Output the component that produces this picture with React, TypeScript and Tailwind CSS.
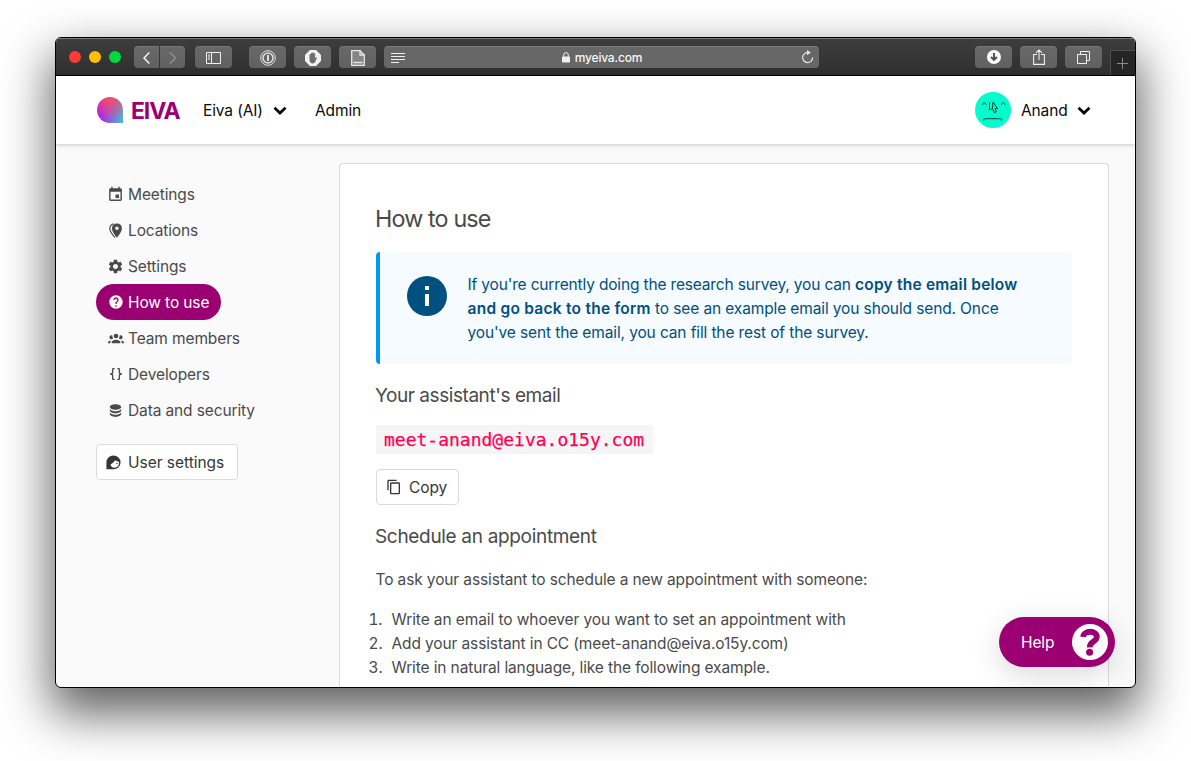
import type { ReactNode } from "react";
import { MdContentCopy, MdEvent, MdHelp, MdSettings } from "react-icons/md";

const nav: { label: string; icon: ReactNode; active?: boolean }[] = [
  { label: "Meetings", icon: <MdEvent size={17} /> },
  {
    label: "Locations",
    icon: (
      <svg width="17" height="17" viewBox="0 0 24 24" fill="currentColor">
        <path d="M14 2a6.800 6.800 0 0 0-7 7c0 5.200 7 13 7 13s7-7.800 7-13a6.800 6.800 0 0 0-7-7zm0 4.400a2.500 2.500 0 1 1 0 5 2.500 2.500 0 0 1 0-5z" />
        <path d="M9.500 2.500C6.500 3.400 4 5.500 4 9c0 4.500 5.500 11.500 7.500 13" fill="none" stroke="currentColor" strokeWidth="1.700" />
      </svg>
    ),
  },
  { label: "Settings", icon: <MdSettings size={17} /> },
  { label: "How to use", icon: <MdHelp size={16} />, active: true },
  {
    label: "Team members",
    icon: (
      <svg width="16" height="16" viewBox="0 0 24 24" fill="currentColor" className="shrink-0">
        <path d="M12 5.500A3.500 3.500 0 0 1 15.500 9 3.500 3.500 0 0 1 12 12.500 3.500 3.500 0 0 1 8.500 9 3.500 3.500 0 0 1 12 5.500M5 8c.56 0 1.080.15 1.530.42-.15 1.430.27 2.850 1.130 3.960C7.160 13.340 6.160 14 5 14a3 3 0 0 1 0-6m14 0a3 3 0 0 1 0 6c-1.160 0-2.160-.66-2.660-1.620.86-1.110 1.280-2.530 1.130-3.960C17.920 8.150 18.440 8 19 8M5.500 18.250c0-2.070 2.910-3.750 6.500-3.750s6.500 1.680 6.500 3.750V20h-13zM0 20v-1.500c0-1.390 1.890-2.560 4.450-2.900-.59.68-.95 1.620-.95 2.650V20zm24 0h-3.500v-1.750c0-1.030-.36-1.970-.95-2.650 2.560.34 4.450 1.510 4.450 2.900z" />
      </svg>
    ),
  },
  {
    label: "Developers",
    icon: (
      <svg width="16" height="16" viewBox="0 0 24 24" fill="currentColor">
        <path d="M8 3a2 2 0 0 0-2 2v4a2 2 0 0 1-2 2H3v2h1a2 2 0 0 1 2 2v4a2 2 0 0 0 2 2h2v-2H8v-5a2 2 0 0 0-2-2 2 2 0 0 0 2-2V5h2V3m6 0a2 2 0 0 1 2 2v4a2 2 0 0 0 2 2h1v2h-1a2 2 0 0 0-2 2v4a2 2 0 0 1-2 2h-2v-2h2v-5a2 2 0 0 1 2-2 2 2 0 0 1-2-2V5h-2V3z" />
      </svg>
    ),
  },
  {
    label: "Data and security",
    icon: (
      <svg width="17" height="17" viewBox="0 0 24 24" fill="currentColor">
        <path d="M12 3C7.580 3 4 4.790 4 7s3.580 4 8 4 8-1.790 8-4-3.580-4-8-4M4 9v3c0 2.210 3.580 4 8 4s8-1.790 8-4V9c0 2.210-3.580 4-8 4s-8-1.790-8-4m0 5v3c0 2.210 3.580 4 8 4s8-1.790 8-4v-3c0 2.210-3.580 4-8 4s-8-1.790-8-4z" />
      </svg>
    ),
  },
];

function ToolButton({
  children,
  className = "",
  shape = "w-[37px] rounded-[4px] text-[#f0f0f0]",
}: {
  children: ReactNode;
  className?: string;
  shape?: string;
}) {
  return (
    <div
      className={`flex h-[22px] shrink-0 items-center justify-center border-t border-[#777] bg-gradient-to-b from-[#686868] to-[#616161] ${shape} ${className}`}
    >
      {children}
    </div>
  );
}

function Chevron() {
  return (
    <svg width="14" height="10" viewBox="0 0 14 10" fill="none" stroke="#0a0a0a" strokeWidth="2.800" className="mt-[2px]">
      <path d="M1.500 1.800 7 7l5.500-5.200" />
    </svg>
  );
}

function Toolbar() {
  return (
    <div className="flex h-[37px] shrink-0 items-center border-t border-[#777] bg-gradient-to-b from-[#3d3d3d] to-[#2f2f2f] pl-[13px] tracking-normal">
      <div className="flex gap-2">
        <span className="size-3 rounded-full bg-[#ff3b38]" />
        <span className="size-3 rounded-full bg-[#ffbf00]" />
        <span className="size-3 rounded-full bg-[#00d93c]" />
      </div>
      <ToolButton className="ml-[13px]" shape="w-[25px] rounded-l-[4px] text-[#f5f5f5]">
        <svg width="10" height="14" viewBox="0 0 10 14" fill="none" stroke="currentColor" strokeWidth="1.500">
          <path d="M7.300 1.500 2 7l5.300 5.500" />
        </svg>
      </ToolButton>
      <ToolButton className="ml-px" shape="w-[25px] rounded-r-[4px] text-[#929292]">
        <svg width="10" height="14" viewBox="0 0 10 14" fill="none" stroke="currentColor" strokeWidth="1.300">
          <path d="M2.200 1.500 7.500 7l-5.300 5.500" />
        </svg>
      </ToolButton>
      <ToolButton className="ml-[10px]">
        <svg width="15" height="12" viewBox="0 0 15 12" fill="none" stroke="currentColor">
          <path d="M.5.5h14v11H.5zM5.500.5v11M2 3h2M2 5h2M2 7h2" />
        </svg>
      </ToolButton>
      <ToolButton className="ml-[17px]">
        <svg width="16" height="16" viewBox="0 0 16 16" fill="none" stroke="#e0e0e0">
          <circle cx="8" cy="8" r="7.300" />
          <circle cx="8" cy="8" r="5" strokeWidth="1.500" />
          <path d="M8 5v6" strokeWidth="2" />
        </svg>
      </ToolButton>
      <ToolButton className="ml-2">
        <svg width="16" height="16" viewBox="0 0 16 16">
          <path d="M5 0h6l5 5v6l-5 5H5l-5-5V5z" fill="#f3f3f3" />
          <path d="M4.500 8V4.700c0-1 1.400-1 1.400 0V3.500c0-1 1.400-1 1.400 0V3c0-1 1.400-1 1.400 0v.8c0-1 1.400-1 1.400 0v4.600l.9-1c.7-.5 1.300.1.9.7L10.200 12c-.6 1-1.400 1.400-2.500 1.400-2.100 0-3.200-1.400-3.200-3.400z" fill="#707070" />
        </svg>
      </ToolButton>
      <ToolButton className="ml-2">
        <svg width="14" height="16" viewBox="0 0 14 16" fill="none" stroke="#e8e8e8">
          <path d="M.7.7h8.300l4.300 4.300v10.300H.7z" fill="#858585" strokeWidth="1.300" />
          <path d="M9 .7V5h4.300M2.500 12.500h9" strokeWidth="1.300" />
        </svg>
      </ToolButton>
      <div className="ml-2 flex h-[22px] w-[435px] shrink-0 items-center rounded-[4px] border-t border-[#7b7b7b] bg-[#676767] pr-[5px] pl-[7px]">
        <svg width="14" height="10" viewBox="0 0 14 10" stroke="#eee">
          <path d="M0 .5h14M0 3.500h14M0 6.500h14M0 9.500h8" />
        </svg>
        <div className="flex flex-1 items-center justify-center gap-[5px] pr-[2px] text-[12px] font-medium tracking-[-0.2px] text-[#f7f7f7]">
          <svg width="8" height="11" viewBox="0 0 8 11">
            <rect y="4.500" width="8" height="6" rx=".8" fill="#f0f0f0" />
            <path d="M1.700 5V3a2.300 2.300 0 0 1 4.600 0v2" fill="none" stroke="#f0f0f0" />
          </svg>
          myeiva.com
        </div>
        <svg width="13" height="14" viewBox="0 0 13 14" fill="none" stroke="#e8e8e8" strokeWidth="1.200" className="-mt-px">
          <path d="M7 2.600A5 5 0 1 0 11.600 7.500" />
          <path d="M6 0 9.800 2.600 6 5.200z" fill="#e8e8e8" stroke="none" />
        </svg>
      </div>
      <ToolButton className="ml-[156px]">
        <svg width="14" height="14" viewBox="0 0 14 14" className="-mt-px">
          <circle cx="7" cy="7" r="7" fill="#fafafa" />
          <path d="M7 3v6.500M4 7l3 3 3-3" fill="none" stroke="#4d4d4d" strokeWidth="1.900" />
        </svg>
      </ToolButton>
      <ToolButton className="ml-2">
        <svg width="12" height="16" viewBox="0 0 12 16" fill="none" stroke="currentColor" strokeWidth="1.100" className="-mt-[2px]">
          <path d="M4 5.500H.6v9.900h10.800V5.500H8M6 11V1M3 3.800 6 .9l3 2.900" />
        </svg>
      </ToolButton>
      <ToolButton className="ml-2">
        <svg width="13" height="13" viewBox="0 0 13 13" fill="none" stroke="currentColor" className="-mt-px">
          <path d="M.5 3.500h9v9h-9zM3.500 3.500v-3h9v9h-3" />
        </svg>
      </ToolButton>
      <div className="ml-2 flex h-[25px] flex-1 items-center justify-center self-end border-t border-l border-[#505050] bg-[#252525]">
        <svg width="11" height="11" viewBox="0 0 11 11" stroke="#8a8a8a" className="mr-px">
          <path d="M5.500 0v11M0 5.500h11" />
        </svg>
      </div>
    </div>
  );
}

export default function App() {
  return (
    <div className="h-[761px] w-[1191px] overflow-hidden bg-white pt-[37px] pl-[55px] font-['Inter','Liberation_Sans',sans-serif] text-[15.5px] leading-6 tracking-[-0.12px] text-[#4a4a4a]">
      <div className="relative flex h-[651px] w-[1081px] flex-col overflow-clip rounded-[6px] border border-black bg-[#fafafa] shadow-[0_22px_48px_4px_rgba(0,0,0,0.62)]">
        <Toolbar />
        <div className="h-px shrink-0 bg-black" />
        <header className="z-10 flex h-[68px] shrink-0 items-center bg-white pr-[44px] pl-[41px] text-[#0a0a0a] shadow-[0_1px_4px_rgba(0,0,0,0.2)]">
          <div className="size-[26px] rounded-[13px_13px_0_13px] bg-[radial-gradient(circle_at_45%_0%,#ff4d5a_0%,rgba(255,77,90,0)_85%),linear-gradient(100deg,#a81bff_20%,#4fb3d1_95%)]" />
          <span className="ml-2 w-[72px] pt-px text-[23px] font-bold tracking-[-1.1px] text-[#9b0073]">EIVA</span>
          <span className="w-[70px] pt-[2px]">Eiva (AI)</span>
          <Chevron />
          <span className="ml-7 pt-[2px]">Admin</span>
          <div className="ml-auto size-9 rounded-full bg-[#00ffcc]">
            <svg width="36" height="36" viewBox="0 0 36 36" fill="none" stroke="#123c34" strokeLinecap="round">
              <path d="M7.500 12.500c.5-2.500 3-2.500 3.500 0M26.500 12.500c.5-2.500 3-2.500 3.500 0" strokeWidth=".9" />
              <path d="M8.700 28.500c-1-2 .5-1.800 9.300-1.800s9.500-.2 8.500 1.800" />
              <path d="M14.500 10.500v7.500l3-1.500 1.700 4 2.300-1-1.500-3h2.500L18 10l-.5 6.500" />
            </svg>
          </div>
          <span className="mr-[9px] ml-[10px] w-[47px] pt-[2px]">Anand</span>
          <Chevron />
        </header>
        <div className="flex min-h-0 flex-1">
          <aside className="w-[283px] shrink-0 pt-8 pl-10">
            <nav className="flex flex-col items-start">
              {nav.map((item) => (
                <a
                  key={item.label}
                  className={`flex h-9 items-center rounded-full pr-3 pl-[11px] whitespace-nowrap ${item.active ? "bg-[#9b0073] text-white" : "text-[#4a4a4a]"}`}
                >
                  <span className="mr-1 flex w-[17px] justify-center">{item.icon}</span>
                  <span className="pt-[2px]">{item.label}</span>
                </a>
              ))}
            </nav>
            <button className="mt-4 flex h-9 w-[142px] items-center gap-[6px] rounded-[4px] border border-[#dbdbdb] bg-white pl-2 tracking-[-0.02px] whitespace-nowrap text-[#363636]">
              <svg width="17" height="17" viewBox="0 0 24 24" fill="currentColor">
                <path
                  d="M2 21.500V12A10 9.700 0 1 1 12 21.500zM8 14.500c0 3 2.300 5 5.200 5 3.600 0 6.600-2.800 6.600-6.300 0-1.200-.3-2-.7-2.700-2 .2-3.400-.4-4.800-1.600-1.300 2.200-3.700 4.200-6.300 5.600z"
                  fillRule="evenodd"
                />
                <circle cx="16.800" cy="13.500" r="1" />
              </svg>
              <span className="pt-[2px]">User settings</span>
            </button>
          </aside>
          <main className="mt-[19px] flex w-[770px] flex-col items-start rounded-t-[4px] border border-b-0 border-[#dbdbdb] bg-white px-9 pt-[36px]">
            <h1 className="mt-px -ml-px text-[23.3px] leading-9 tracking-[-0.85px]">How to use</h1>
            <div className="mt-[15px] flex h-28 w-[696px] rounded-[4px] border-l-4 border-[#0099f2] bg-[#f5fbff] pt-[21px] pl-[27px] text-[#004f7c]">
              <div className="mt-[3px] flex size-10 shrink-0 flex-col items-center rounded-full bg-[#005080] pt-[10px]">
                <span className="size-1 bg-white" />
                <span className="mt-1 h-3 w-1 bg-white" />
              </div>
              <p className="ml-[20.5px] whitespace-nowrap">
                <span className="tracking-[-0.16px]">If you're currently doing the research survey, you can </span>
                <b className="font-semibold tracking-[0.22px]">copy the email below</b>
                <br />
                <b className="font-semibold tracking-[0.25px]">and go back to the form</b> to see an example email you should send. Once
                <br />
                you've sent the email, you can fill the rest of the survey.
              </p>
            </div>
            <h2 className="mt-5 -ml-px text-[19px] tracking-[-0.44px]">Your assistant's email</h2>
            <code className="mt-[17px] flex h-[29px] w-[277px] items-center bg-[#f5f5f5] pl-2 font-['DejaVu_Sans_Mono',monospace] text-[18px] tracking-normal whitespace-nowrap text-[#ff0055] [-webkit-text-stroke:0.25px_#ff0055]">
              meet-anand@eiva.o15y.com
            </code>
            <button className="mt-[15px] flex h-9 w-[83px] items-center gap-[7px] rounded-[4px] border border-[#dbdbdb] bg-white pl-[9px] text-[#363636]">
              <MdContentCopy size={16} />
              <span className="pt-[2px]">Copy</span>
            </button>
            <h2 className="mt-5 -ml-px text-[19px] tracking-[-0.32px]">Schedule an appointment</h2>
            <p className="mt-[19px] -ml-[0.5px]">To ask your assistant to schedule a new appointment with someone:</p>
            <ol className="mt-4 ml-[10.5px] list-decimal">
              <li className="pl-[5px] tracking-[-0.09px]">Write an email to whoever you want to set an appointment with</li>
              <li className="pl-[5px]">Add your assistant in CC (meet-anand@eiva.o15y.com)</li>
              <li className="pl-[5px]">Write in natural language, like the following example.</li>
            </ol>
          </main>
        </div>
        <button className="absolute right-5 bottom-5 flex h-[50px] w-[116px] items-center justify-between rounded-full bg-[#9b0073] pr-[7px] pl-[22px] text-[#fff] shadow-[0_8px_30px_rgba(0,0,0,0.15)]">
          <span className="pt-[2px]">Help</span>
          <svg width="36" height="36" viewBox="0 0 36 36">
            <circle cx="18" cy="18" r="18" fill="#fff" />
            <path d="M11.200 12.800c.3-6.500 13.900-7 13.600.2-.2 5-7.300 4.500-7 10.300" fill="none" stroke="#9b0073" strokeWidth="5.800" />
            <circle cx="17.600" cy="28.200" r="3.500" fill="#9b0073" />
          </svg>
        </button>
      </div>
    </div>
  );
}
